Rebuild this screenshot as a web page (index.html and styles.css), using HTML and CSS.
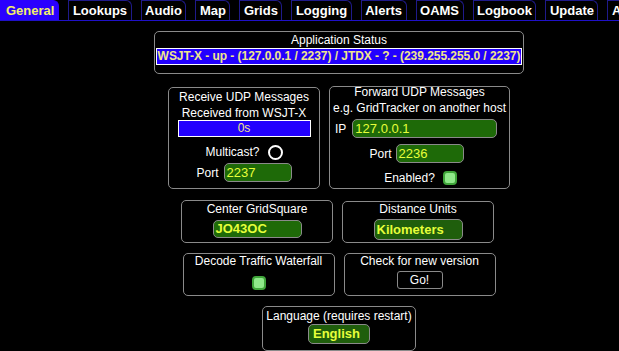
FILE: index.html
```html
<!DOCTYPE html>
<html>
<head>
<meta charset="utf-8">
<link rel="stylesheet" href="styles.css">
</head>
<body>
<div class="page">
  <div class="tabs">
    <div class="tab active">General</div>
    <div class="tab">Lookups</div>
    <div class="tab">Audio</div>
    <div class="tab">Map</div>
    <div class="tab">Grids</div>
    <div class="tab">Logging</div>
    <div class="tab">Alerts</div>
    <div class="tab">OAMS</div>
    <div class="tab">Logbook</div>
    <div class="tab">Update</div>
    <div class="tab">About</div>
  </div>
  <div class="content">
    <div class="row r1">
      <div class="box status-box">
        <div class="title">Application Status</div>
        <div class="status-bar">WSJT-X - up - (127.0.0.1 / 2237) / JTDX - ? - (239.255.255.0 / 2237)</div>
      </div>
    </div>
    <div class="row r2">
      <div class="box recv">
        <div class="title t1">Receive UDP Messages</div>
        <div class="title">Received from WSJT-X</div>
        <div class="time-bar">0s</div>
        <div class="line mc">Multicast? <span class="radio"></span></div>
        <div class="line port1">Port <span class="input w68">2237</span></div>
      </div>
      <div class="box fwd">
        <div class="title t1">Forward UDP Messages</div>
        <div class="title">e.g. GridTracker on another host</div>
        <div class="line ip">IP <span class="input w145">127.0.0.1</span></div>
        <div class="line port2">Port <span class="input w68">2236</span></div>
        <div class="line en">Enabled? <span class="check"></span></div>
      </div>
    </div>
    <div class="row r3">
      <div class="box small b-grid">
        <div class="title">Center GridSquare</div>
        <span class="input grid">JO43OC</span>
      </div>
      <div class="box small b-dist">
        <div class="title">Distance Units</div>
        <span class="select dist">Kilometers</span>
      </div>
    </div>
    <div class="row r4">
      <div class="box small b-wf">
        <div class="title">Decode Traffic Waterfall</div>
        <span class="check wf"></span>
      </div>
      <div class="box small b-ver">
        <div class="title">Check for new version</div>
        <span class="btn">Go!</span>
      </div>
    </div>
    <div class="row r5">
      <div class="box lang">
        <div class="title">Language (requires restart)</div>
        <span class="select eng">English</span>
      </div>
    </div>
  </div>
</div>
</body>
</html>
```
FILE: styles.css
```css
html, body {
  margin: 0;
  padding: 0;
  background: #000;
  overflow: hidden;
}
.page {
  width: 678px;
  font-family: "Liberation Sans", Arial, sans-serif;
  color: #fff;
  font-size: 12px;
}
.tabs {
  display: flex;
  height: 20px;
  border-bottom: 1px solid #1f10c8;
  gap: 9px;
  white-space: nowrap;
}
.tab {
  font-weight: bold;
  font-size: 13px;
  line-height: 19px;
  padding: 0 3.5px 0 3.5px;
  border: 1px solid #1f1a8a;
  border-bottom: none;
  border-radius: 0 6px 0 0;
  color: #fff;
  box-sizing: border-box;
  height: 20px;
}
.tab.active {
  background: #2a00ff;
  color: #f4ef6a;
  border-color: #2a00ff;
  padding: 0 4px 0 5px;
}
.content {
  display: flex;
  flex-direction: column;
  align-items: center;
}
.row {
  display: flex;
  justify-content: center;
  gap: 9px;
}
.box {
  border: 1px solid #8a8a8a;
  border-radius: 5px;
  box-sizing: border-box;
  display: flex;
  flex-direction: column;
  align-items: center;
  text-align: center;
}
.title {
  line-height: 16px;
  white-space: nowrap;
}
.r1 { margin-top: 10px; }
.status-box {
  width: 370px;
  height: 43px;
  padding: 0 1px;
}
.status-bar {
  align-self: stretch;
  background: #2200ff;
  border: 1px solid #fff;
  color: #f0e68c;
  font-weight: bold;
  font-size: 12px;
  line-height: 15px;
  white-space: nowrap;
  overflow: hidden;
  letter-spacing: -0.05px;
}
.r2 { margin-top: 13px; }
.recv {
  width: 152px;
  height: 102px;
}
.recv .t1 { margin-top: 1px; }
.fwd {
  width: 181px;
  height: 103px;
  margin-top: -1px;
}
.fwd .t1 { margin-top: -3px; }
.time-bar {
  width: 133px;
  box-sizing: border-box;
  background: #2200ff;
  border: 1px solid #fff;
  color: #f0e68c;
  line-height: 15px;
  margin-top: -1px;
}
.line {
  display: flex;
  align-items: center;
  white-space: nowrap;
}
.mc { margin-top: 7px; height: 16px; gap: 8px; }
.port1 { margin-top: 3px; gap: 5px; }
.ip { margin-top: 3px; align-self: flex-start; padding-left: 5px; gap: 6px; }
.port2 { margin-top: 6px; padding-right: 6px; gap: 4px; }
.en { margin-top: 8px; gap: 8px; padding-left: 2px; }
.input, .select {
  display: inline-block;
  box-sizing: border-box;
  background: #1e6a08;
  border: 1px solid #8a8a8a;
  border-radius: 5px;
  color: #e6ff3a;
  font-size: 13px;
  line-height: 17px;
  height: 19px;
  text-align: left;
  padding-left: 2px;
}
.w68 { width: 68px; }
.w145 { width: 145px; }
.radio {
  width: 15px;
  height: 15px;
  box-sizing: border-box;
  border: 2px solid #fff;
  border-radius: 50%;
  display: inline-block;
}
.check {
  width: 14px;
  height: 14px;
  box-sizing: border-box;
  background: #8fe88a;
  border: 2px solid #3fa53a;
  border-radius: 4px;
  display: inline-block;
}
.r3 { margin-top: 11px; padding-right: 3px; }
.small {
  width: 152px;
  height: 43px;
}
.small .title { line-height: 14px; }
.b-grid .title { margin-top: 1px; }
.b-dist { margin-top: 1px; height: 42px; }
.grid {
  width: 89px;
  margin-top: 4px;
  height: 18px;
  line-height: 16px;
  font-weight: bold;
  font-size: 13px;
}
.dist {
  width: 89px;
  height: 21px;
  margin-top: 3px;
  font-weight: bold;
  line-height: 19px;
  background: #1f5e0c;
}
.r4 { margin-top: 10px; }
.wf { margin-top: 8px; }
.btn {
  display: inline-block;
  width: 46px;
  height: 18px;
  box-sizing: border-box;
  border: 1px solid #8a8a8a;
  border-radius: 3px;
  line-height: 16px;
  margin-top: 3px;
  font-size: 12px;
}
.r5 { margin-top: 10px; }
.lang {
  width: 154px;
  height: 45px;
}
.lang .title { margin-top: 1px; }
.eng {
  width: 62px;
  height: 20px;
  margin-top: 0;
  font-weight: bold;
  line-height: 18px;
  background: #1f5e0c;
  padding-left: 4px;
}
```
